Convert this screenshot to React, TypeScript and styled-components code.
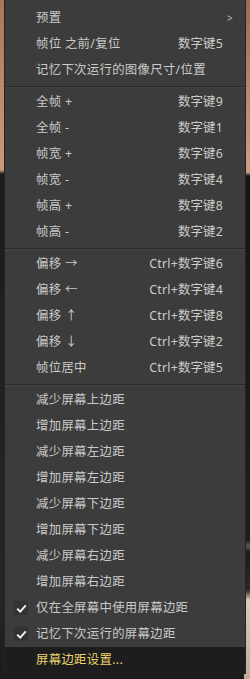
import { createGlobalStyle } from 'styled-components';
import styled from 'styled-components';

const Global = createGlobalStyle`
  html, body {
    margin: 0;
    padding: 0;
    height: 679px;
    overflow: hidden;
  }
  body {
    font-family: "Noto Sans", "Noto Sans CJK SC", sans-serif;
    background:
      linear-gradient(to bottom, #a8785a 0, #c99b7c 170px, #1b1b1b 174px, #262626 600px, #1a1a1a 679px) left top / 4px 100% no-repeat,
      linear-gradient(to bottom, #9a6c50 0, #caa184 172px, #151515 176px, #1d1d1d 540px, #5a5a5a 546px, #1d1d1d 552px, #2a2622 590px, #d9cbb6 600px, #bfae98 679px) right top / 6px 100% no-repeat,
      #1b1b1b;
  }
`;

const Menu = styled.div`
  margin-left: 4px;
  width: 242px;
  height: 674px;
  box-sizing: border-box;
  padding-top: 5px;
  background: #3c3c3c;
  border-left: 1px solid #242424;
  border-right: 1px solid #242424;
  border-bottom: 1px solid #202020;
`;

const Row = styled.div<{ $active?: boolean }>`
  display: grid;
  grid-template-columns: 31px 1fr auto 22px;
  align-items: center;
  height: 26px;
  font-size: 12.4px;
  line-height: 26px;
  color: ${({ $active }) => ($active ? '#e9d46c' : '#cacaca')};
  background: ${({ $active }) => ($active ? '#1d1d1d' : 'transparent')};
  white-space: nowrap;
`;

const Label = styled.span`
  letter-spacing: 0.3px;
`;

const Key = styled.span`
  text-align: right;
  color: #cccccc;
  letter-spacing: 0.2px;
`;

const Arrow = styled.span`
  padding-left: 4px;
  font-size: 10px;
  color: #bdbdbd;
`;

const CheckCell = styled.span`
  display: flex;
  justify-content: center;
  padding-left: 1px;
`;

const CheckBox = styled.span`
  width: 14px;
  height: 14px;
  border-radius: 2px;
  background: #333;
  display: flex;
  align-items: center;
  justify-content: center;
`;

const Sep = styled.div`
  height: 6px;
  display: flex;
  align-items: center;
  &::after {
    content: '';
    flex: 1;
    height: 1px;
    background: #2a2a2a;
    box-shadow: 0 1px 0 #444;
  }
`;

type Item = { label: string; key?: string; sub?: boolean; check?: boolean; active?: boolean } | 'sep';

const items: Item[] = [
  { label: '预置', sub: true },
  { label: '帧位 之前/复位', key: '数字键5' },
  { label: '记忆下次运行的图像尺寸/位置' },
  'sep',
  { label: '全帧 +', key: '数字键9' },
  { label: '全帧 -', key: '数字键1' },
  { label: '帧宽 +', key: '数字键6' },
  { label: '帧宽 -', key: '数字键4' },
  { label: '帧高 +', key: '数字键8' },
  { label: '帧高 -', key: '数字键2' },
  'sep',
  { label: '偏移 →', key: 'Ctrl+数字键6' },
  { label: '偏移 ←', key: 'Ctrl+数字键4' },
  { label: '偏移 ↑', key: 'Ctrl+数字键8' },
  { label: '偏移 ↓', key: 'Ctrl+数字键2' },
  { label: '帧位居中', key: 'Ctrl+数字键5' },
  'sep',
  { label: '减少屏幕上边距' },
  { label: '增加屏幕上边距' },
  { label: '减少屏幕左边距' },
  { label: '增加屏幕左边距' },
  { label: '减少屏幕下边距' },
  { label: '增加屏幕下边距' },
  { label: '减少屏幕右边距' },
  { label: '增加屏幕右边距' },
  { label: '仅在全屏幕中使用屏幕边距', check: true },
  { label: '记忆下次运行的屏幕边距', check: true },
  { label: '屏幕边距设置...', active: true },
];

function Check() {
  return (
    <CheckBox>
      <svg width="11" height="9" viewBox="0 0 11 9">
        <path d="M1.2 4.6 L4.2 7.6 L9.8 1.4" fill="none" stroke="#f2f2f2" strokeWidth="2" />
      </svg>
    </CheckBox>
  );
}

export default function App() {
  return (
    <>
      <Global />
      <Menu>
        {items.map((it, i) =>
          it === 'sep' ? (
            <Sep key={i} />
          ) : (
            <Row key={i} $active={it.active}>
              <CheckCell>{it.check && <Check />}</CheckCell>
              <Label>{it.label}</Label>
              <Key>{it.key}</Key>
              <Arrow>{it.sub ? '>' : ''}</Arrow>
            </Row>
          )
        )}
      </Menu>
    </>
  );
}
